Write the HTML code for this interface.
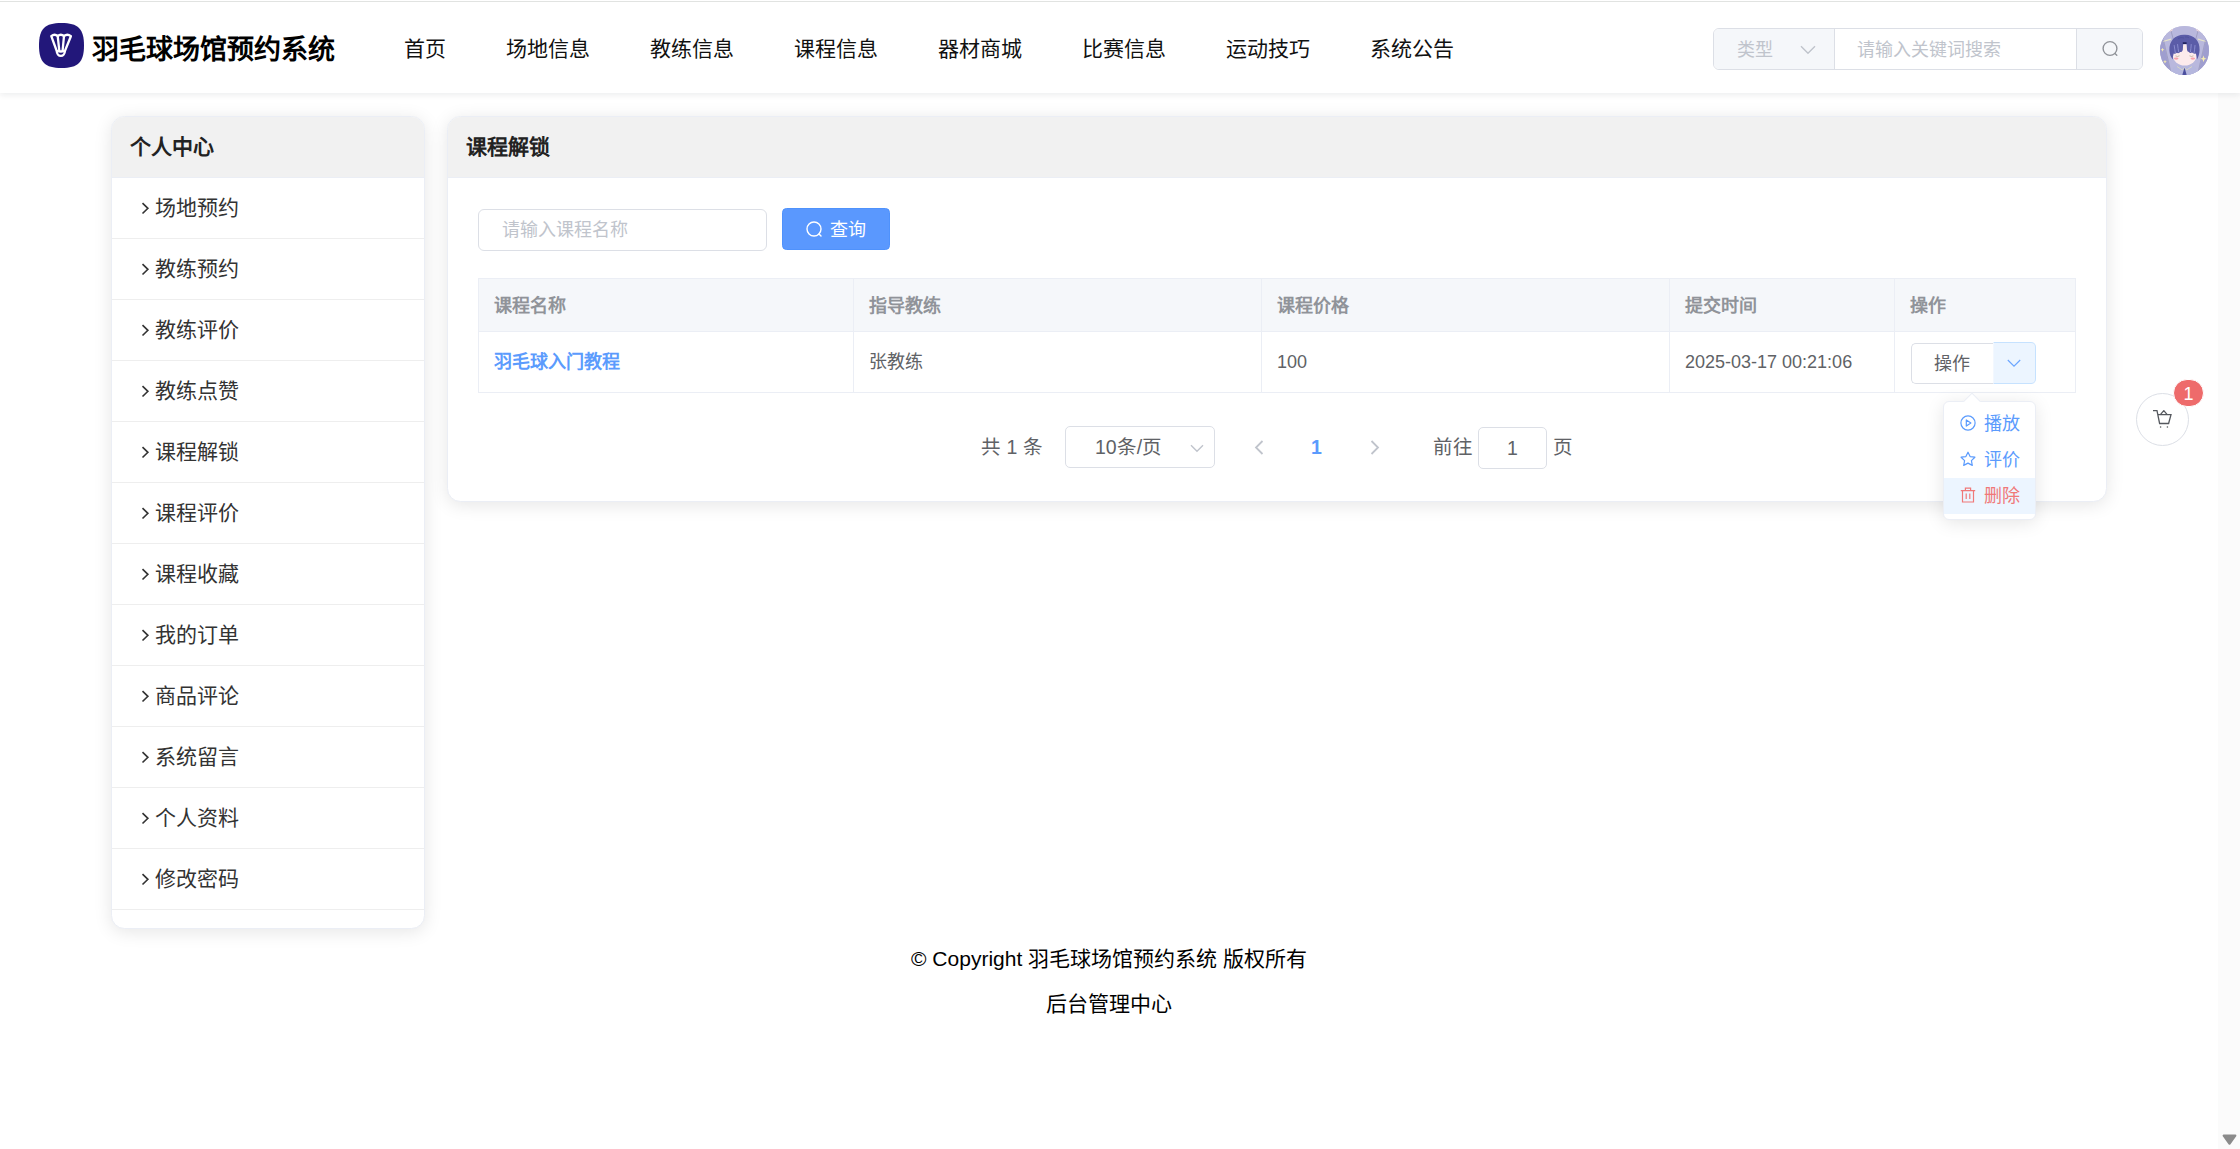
<!DOCTYPE html>
<html lang="zh-CN">
<head>
<meta charset="utf-8">
<title>羽毛球场馆预约系统</title>
<style>
*{box-sizing:border-box;margin:0;padding:0}
html,body{width:2240px;height:1149px;overflow:hidden;background:#fff}
body{position:relative;font-family:"Liberation Sans",sans-serif;color:#333;-webkit-font-smoothing:antialiased}
.abs{position:absolute}
/* scrollbar */
#sb{position:absolute;left:2218px;top:0;width:22px;height:1149px;background:#fbfbfb}
/* header */
#hd{position:absolute;left:0;top:0;width:2240px;height:93px;background:#fff;box-shadow:0 1.5px 6px rgba(0,21,41,.08)}
#topline{position:absolute;left:0;top:1px;width:2240px;height:1px;background:#e1e3e1}
#logo{position:absolute;left:39px;top:23px;width:45px;height:45px}
#title{position:absolute;left:92px;top:31.5px;height:36px;line-height:36px;font-size:27px;font-weight:bold;color:#000;white-space:nowrap;letter-spacing:0}
#nav{position:absolute;left:374px;top:28.5px;height:40px;display:flex;white-space:nowrap}
#nav span{display:block;width:144px;text-align:center;font-size:21px;line-height:40px;color:#111;overflow:visible}
#nav span:first-child{width:102px}
/* search */
#search{position:absolute;left:1713px;top:28px;width:430px;height:42px;border:1px solid #dcdfe6;border-radius:6px;background:#fff;display:flex;overflow:hidden}
#search .pre{width:121px;background:#f5f7fa;border-right:1px solid #dcdfe6;position:relative;color:#c0c4cc;font-size:18px;line-height:42px;padding-left:23px}
#search .mid{flex:1;color:#c0c4cc;font-size:18px;line-height:42px;padding-left:22px}
#search .app{width:66px;background:#f5f7fa;border-left:1px solid #dcdfe6;position:relative}
#avatar{position:absolute;left:2160px;top:26px;width:49px;height:49px;border-radius:50%;overflow:hidden}
/* cards */
.card{position:absolute;background:#fff;border:1px solid #ebeef5;border-radius:13.5px;box-shadow:0 3px 18px rgba(0,0,0,.1);overflow:hidden}
.card .hd{height:61px;background:#f1f1f1;border-bottom:1px solid #ebeef5;font-size:21px;font-weight:bold;color:#222;line-height:60px}
#side{left:111px;top:116px;width:314px;height:813px}
#side .hd{padding-left:18px}
#side .it{height:61px;border-bottom:1px solid #eee;line-height:60px;font-size:21px;color:#333;padding-left:29px;white-space:nowrap;position:relative}
#side .it svg{position:absolute;left:29px;top:23px}
#side .it b{font-weight:normal;margin-left:14px}
#main{left:447px;top:116px;width:1660px;height:386px;overflow:visible}
#main .hd{padding-left:18px;border-radius:12.5px 12.5px 0 0}

/* main body (coords relative to #main at 448,116) */
#q{position:absolute;left:30px;top:92px;width:289px;height:42px;border:1px solid #dcdfe6;border-radius:6px;font-size:18px;line-height:40px;color:#c0c4cc;padding-left:23px;white-space:nowrap}
#qb{position:absolute;left:334px;top:91px;width:108px;height:42px;border-radius:4.5px;background:#5a98fe;border:1px solid #4f92fc;color:#fff;font-size:18px;line-height:42px;white-space:nowrap}
#qb svg{position:absolute;left:21.9px;top:10.9px}
#qb span{position:absolute;left:47.2px;top:0}
#tb{position:absolute;left:30px;top:161px;width:1598px;height:115px;border:1px solid #ebeef5;border-right:none;font-size:18px}
#tb .th{position:absolute;top:0;height:53px;background:#f5f7fa;border-right:1px solid #ebeef5;border-bottom:1px solid #ebeef5;color:#909399;font-weight:bold;line-height:55px;padding-left:15px;white-space:nowrap}
#tb .td{position:absolute;top:53px;height:60px;border-right:1px solid #ebeef5;color:#606266;line-height:61px;padding-left:15px;white-space:nowrap}
#tb a{color:#5b9bfd;font-weight:bold;text-decoration:none}
.c1{left:0;width:375px}.c2{left:375px;width:408px}.c3{left:783px;width:408px}.c4{left:1191px;width:225px}.c5{left:1416px;width:181px}
#op1{position:absolute;left:1463px;top:226px;width:83px;height:41px;border:1px solid #dcdfe6;border-right:none;border-radius:5px 0 0 5px;background:#fff;color:#606266;font-size:18px;line-height:40px;text-align:center;padding-right:2px}
#op2{position:absolute;left:1545px;top:225px;width:43px;height:42px;border:1px solid #c6e2ff;border-left-color:#f3f8ff;border-radius:0 5px 5px 0;background:#ecf5ff}
#op2 svg{position:absolute;left:12.7px;top:15.5px}
/* pagination */
#pg{position:absolute;left:0;top:309px;width:1658px;height:42px;font-size:19.5px;color:#606266;line-height:42px;white-space:nowrap}
#pg>*{position:absolute;top:0}
#pg .sel{left:617px;width:150px;height:42px;border:1px solid #dcdfe6;border-radius:5px;line-height:40px}
#pg .sel span{position:absolute;left:29px;top:0}
#pg .sel svg{position:absolute;left:124px;top:17px}
#pg .jmp{left:1030px;top:1px;width:69px;height:42px;border:1px solid #dcdfe6;border-radius:5px;line-height:40px;text-align:center}

/* dropdown */
#dd{position:absolute;left:1943px;top:401px;width:93px;height:119px;background:#fff;border:1px solid #ebeef5;border-radius:6px;box-shadow:0 3px 18px rgba(0,0,0,.1);font-size:18px}
#dd .ar{position:absolute;left:22px;top:-7.2px;width:12px;height:12px;background:#fff;border-left:1px solid #ebeef5;border-top:1px solid #ebeef5;transform:rotate(45deg)}
#dd .mi{position:absolute;left:0;width:91px;height:36px;line-height:36px;color:#5b9bfd;white-space:nowrap}
#dd .mi svg{position:absolute;left:16px;top:9.3px}
#dd .mi span{position:absolute;left:40px;top:0}
#dd .mi.del{background:#ecf5ff;color:#f07878}
/* cart */
#cart{position:absolute;left:2136px;top:393px;width:53px;height:53px;border:1px solid #dcdfe6;border-radius:50%;background:#fff}
#cart svg{position:absolute;left:15px;top:15px}
#badge{position:absolute;left:2173px;top:379px;width:31px;height:28px;border:1px solid #fff;border-radius:14px;background:#ee6b6b;color:#fff;font-size:18px;line-height:28px;text-align:center}
/* footer */
#ft{position:absolute;left:0;top:938px;width:2218px;text-align:center;font-size:21px;line-height:43px;color:#000;white-space:nowrap}
</style>
</head>
<body>
<div id="sb"><svg style="position:absolute;left:4.3px;top:1134.3px" width="15" height="12" viewBox="0 0 15 12"><path d="M1.600 1.600 H13.400 L7.500 9.800 Z" fill="#8b8b8b" stroke="#8b8b8b" stroke-width="2" stroke-linejoin="round"/></svg></div>
<div id="hd">
  <div id="topline"></div>
  <svg id="logo" viewBox="0 0 45 45"><path d="M22.5 0C39.2 0 45 5.8 45 22.5C45 39.2 39.2 45 22.5 45C5.8 45 0 39.2 0 22.5C0 5.800 5.800 0 22.5 0Z" fill="#22177a"/><g fill="none" stroke="#fff" stroke-width="2.3" stroke-linecap="round" stroke-linejoin="round"><path d="M12.3 13.2 Q15.5 10.400 18.700 13 Q21.800 10.400 25 13 Q28.400 10.400 31.900 13.2 L25.900 28 A4.070 4.900 0 0 1 17.750 28 Z"/><path d="M18.700 13 L20.300 27.600 M25 13 L23.600 27.600"/><path d="M18 28.100 Q21.800 28.900 25.700 28.100"/></g></svg>
  <div id="title">羽毛球场馆预约系统</div>
  <div id="nav"><span>首页</span><span>场地信息</span><span>教练信息</span><span>课程信息</span><span>器材商城</span><span>比赛信息</span><span>运动技巧</span><span>系统公告</span></div>
  <div id="search"><div class="pre">类型<svg style="position:absolute;left:86px;top:16px" width="16" height="10" viewBox="0 0 16 10"><path d="M1 1.2 L8 8.2 L15 1.2" fill="none" stroke="#c0c4cc" stroke-width="1.4"/></svg></div><div class="mid">请输入关键词搜索</div><div class="app"><svg style="position:absolute;left:23.5px;top:10.9px" width="18" height="18" viewBox="0 0 18 18"><circle cx="9" cy="8.500" r="6.9" fill="none" stroke="#909399" stroke-width="1.4"/><path d="M13.900 13.400 L15.800 15.300" stroke="#909399" stroke-width="1.4" stroke-linecap="round"/></svg></div></div>
  <div id="avatar"><svg width="49" height="49" viewBox="0 0 49 49">
<defs><linearGradient id="ag" x1="0" y1="0" x2="0" y2="1"><stop offset="0" stop-color="#c1c0df"/><stop offset=".55" stop-color="#aeadd6"/><stop offset="1" stop-color="#9695c6"/></linearGradient></defs>
<rect width="49" height="49" fill="url(#ag)"/>
<path d="M0 14 L7 8 L13 49 H0Z M49 14 L42 8 L36 49 H49Z" fill="#9f9ecf"/>
<path d="M8 3 L14 0 H35 L41 3 L46 14 L38 49 H11 L3 14Z" fill="#b9b8dd"/>
<path d="M8.5 3.5 L11 1 L13 4 L10 6Z M40.5 3.5 L38 1 L36 4 L39 6Z" fill="#f4d9dc"/>
<path d="M3 15.5 L11 13.2 M46 15.5 L38 13.2" stroke="#e6e4c8" stroke-width="1.3" fill="none"/>
<path d="M3.5 14 L11.5 49 M45.5 14 L37.500 49 M11 5 L13.500 14 M38 5 L35.500 14" stroke="#8e8eb0" stroke-width=".6" fill="none"/>
<path d="M13.500 41 Q24.500 37 35.500 41 L38 49 H11Z" fill="#b5b7de"/>
<path d="M17 40.500 L22.500 44 L24.500 41.500 L26.500 44 L32 40.500" stroke="#d9d8c4" stroke-width=".9" fill="none"/>
<path d="M24.500 41.500 L26.700 49 H22.300Z" fill="#4b4f9e"/>
<ellipse cx="24.700" cy="29" rx="12" ry="10.500" fill="#fcebec"/>
<path d="M24.5 8.8 C34 8.500 40 15 39.6 24 C39.400 28 38.500 31 37 33.500 C36.800 31 36.300 29 35.800 27.500 C34.500 28 33 27.600 32 26.600 C30.800 27.400 29.500 27 28.600 25.800 C28 26 27.200 25 27 23.500 L26.600 18 H23.200 L22.800 24 C22.300 25.500 21.300 26.300 20.300 26 C19.300 27.200 18 27.500 16.800 26.800 C15.800 27.800 14.600 28 13.700 27.600 C13.200 29 12.900 31 12.900 33.500 C11 31.500 9.600 28.500 9.400 24.500 C9 15 15 8.500 24.5 8.8Z" fill="#5b5ca8"/>
<path d="M14.200 19.500 Q14.800 23.500 15.300 26.600 M17.600 18.500 Q18 22.500 18.600 25.800 M31.200 18.500 Q31 22.500 30.500 25.600 M35 19.500 Q34.700 23.500 34.100 26.600" stroke="#8f92d4" stroke-width=".9" fill="none" stroke-linecap="round"/>
<path d="M18 12.500 Q21 10.800 24 12 M25 11 Q27 10.500 29 11.800" stroke="#474a92" stroke-width=".5" fill="none"/>
<path d="M22.800 16.200 H26.600 V18 H22.800Z" fill="#23235e"/>
<ellipse cx="16.200" cy="32.600" rx="2.300" ry="1.100" fill="#f9a3ab"/><ellipse cx="32.800" cy="32.600" rx="2.300" ry="1.100" fill="#f9a3ab"/>
<path d="M15.500 29.800 Q17.500 31.200 19.500 29.800 M29.500 29.800 Q31.500 31.200 33.500 29.800" stroke="#b9a98a" stroke-width=".7" fill="none"/>
<path d="M43.500 29.500 L44.400 32 L46.500 32.800 L44.400 33.600 L43.500 36.200 L42.600 33.600 L40.500 32.800 L42.600 32Z M2.500 21.800 L3.100 23.300 L4.500 23.800 L3.100 24.300 L2.500 25.800 L1.900 24.300 L.5 23.800 L1.900 23.300Z M5 33.800 L5.600 35.200 L6.900 35.700 L5.600 36.200 L5 37.600 L4.400 36.200 L3.100 35.700 L4.400 35.200Z" fill="#f6ecae"/>
</svg></div>
</div>
<div class="card" id="side">
  <div class="hd">个人中心</div>
  <div class="it"><svg width="9" height="15" viewBox="0 0 9 15"><path d="M1.500 2.100 L6.900 7.300 L1.500 12.500" fill="none" stroke="#333" stroke-width="1.6"/></svg><b>场地预约</b></div>
  <div class="it"><svg width="9" height="15" viewBox="0 0 9 15"><path d="M1.500 2.100 L6.900 7.300 L1.500 12.500" fill="none" stroke="#333" stroke-width="1.6"/></svg><b>教练预约</b></div>
  <div class="it"><svg width="9" height="15" viewBox="0 0 9 15"><path d="M1.500 2.100 L6.900 7.300 L1.500 12.500" fill="none" stroke="#333" stroke-width="1.6"/></svg><b>教练评价</b></div>
  <div class="it"><svg width="9" height="15" viewBox="0 0 9 15"><path d="M1.500 2.100 L6.900 7.300 L1.500 12.500" fill="none" stroke="#333" stroke-width="1.6"/></svg><b>教练点赞</b></div>
  <div class="it"><svg width="9" height="15" viewBox="0 0 9 15"><path d="M1.500 2.100 L6.900 7.300 L1.500 12.500" fill="none" stroke="#333" stroke-width="1.6"/></svg><b>课程解锁</b></div>
  <div class="it"><svg width="9" height="15" viewBox="0 0 9 15"><path d="M1.500 2.100 L6.900 7.300 L1.500 12.500" fill="none" stroke="#333" stroke-width="1.6"/></svg><b>课程评价</b></div>
  <div class="it"><svg width="9" height="15" viewBox="0 0 9 15"><path d="M1.500 2.100 L6.900 7.300 L1.500 12.500" fill="none" stroke="#333" stroke-width="1.6"/></svg><b>课程收藏</b></div>
  <div class="it"><svg width="9" height="15" viewBox="0 0 9 15"><path d="M1.500 2.100 L6.900 7.300 L1.500 12.500" fill="none" stroke="#333" stroke-width="1.6"/></svg><b>我的订单</b></div>
  <div class="it"><svg width="9" height="15" viewBox="0 0 9 15"><path d="M1.500 2.100 L6.900 7.300 L1.500 12.500" fill="none" stroke="#333" stroke-width="1.6"/></svg><b>商品评论</b></div>
  <div class="it"><svg width="9" height="15" viewBox="0 0 9 15"><path d="M1.500 2.100 L6.900 7.300 L1.500 12.500" fill="none" stroke="#333" stroke-width="1.6"/></svg><b>系统留言</b></div>
  <div class="it"><svg width="9" height="15" viewBox="0 0 9 15"><path d="M1.500 2.100 L6.900 7.300 L1.500 12.500" fill="none" stroke="#333" stroke-width="1.6"/></svg><b>个人资料</b></div>
  <div class="it"><svg width="9" height="15" viewBox="0 0 9 15"><path d="M1.500 2.100 L6.900 7.300 L1.500 12.500" fill="none" stroke="#333" stroke-width="1.6"/></svg><b>修改密码</b></div>
</div>
<div class="card" id="main">
  <div class="hd">课程解锁</div>
  <div id="q">请输入课程名称</div>
  <div id="qb"><svg width="18" height="18" viewBox="0 0 18 18"><circle cx="9" cy="9" r="7" fill="none" stroke="#fff" stroke-width="1.4"/><path d="M14 14 L16 16" stroke="#fff" stroke-width="1.4" stroke-linecap="round"/></svg><span>查询</span></div>
  <div id="tb">
    <div class="th c1">课程名称</div><div class="th c2">指导教练</div><div class="th c3">课程价格</div><div class="th c4">提交时间</div><div class="th c5">操作</div>
    <div class="td c1"><a>羽毛球入门教程</a></div><div class="td c2">张教练</div><div class="td c3">100</div><div class="td c4">2025-03-17 00:21:06</div><div class="td c5"></div>
  </div>
  <div id="op1">操作</div>
  <div id="op2"><svg width="14" height="9" viewBox="0 0 14 9"><path d="M.8 1 L7 7.2 L13.2 1" fill="none" stroke="#6aa5ff" stroke-width="1.15"/></svg></div>
  <div id="pg">
    <span style="left:533px">共 1 条</span>
    <div class="sel"><span>10条/页</span><svg width="14" height="9" viewBox="0 0 14 9"><path d="M1 1.2 L7 7.2 L13 1.2" fill="none" stroke="#c0c4cc" stroke-width="1.4"/></svg></div>
    <svg style="left:806px;top:14px" width="10" height="15" viewBox="0 0 10 15"><path d="M8.5 1 L2 7.5 L8.5 14" fill="none" stroke="#c0c4cc" stroke-width="1.8"/></svg>
    <b style="left:863px;color:#5b9bfd">1</b>
    <svg style="left:922px;top:14px" width="10" height="15" viewBox="0 0 10 15"><path d="M1.5 1 L8 7.5 L1.5 14" fill="none" stroke="#c0c4cc" stroke-width="1.8"/></svg>
    <span style="left:985px">前往</span>
    <div class="jmp">1</div>
    <span style="left:1105px">页</span>
  </div>
</div>

<div id="dd"><div class="ar"></div>
  <div class="mi" style="top:4px"><svg width="16" height="16" viewBox="0 0 16 16" fill="none" stroke="#5b9bfd" stroke-width="1.2"><circle cx="8" cy="8" r="7.1"/><path d="M6.3 4.9 L10.9 8 L6.3 11.1 Z" stroke-linejoin="round"/></svg><span>播放</span></div>
  <div class="mi" style="top:40px"><svg width="16" height="16" viewBox="0 0 16 16" fill="none" stroke="#5b9bfd" stroke-width="1.2" stroke-linejoin="round"><path d="M8 1.2 L10.1 5.6 L14.9 6.2 L11.4 9.6 L12.3 14.4 L8 12.1 L3.7 14.4 L4.6 9.6 L1.1 6.2 L5.9 5.6 Z"/></svg><span>评价</span></div>
  <div class="mi del" style="top:76px"><svg width="16" height="16" viewBox="0 0 16 16" fill="none" stroke="#f07878" stroke-width="1.2"><path d="M0.8 3.6 H15.2 M5.4 3.4 V1.2 H10.6 V3.4 M2.5 3.6 V15 H13.5 V3.6 M6.2 6.5 V12 M9.8 6.5 V12"/></svg><span>删除</span></div>
</div>
<div id="cart"><svg width="21" height="20" viewBox="0 0 21 20" fill="none" stroke="#55585e" stroke-width="1.3"><path d="M1 1.7 H5 L7.6 14.5 H16.6 L19 5.6 H6"/><path d="M8.6 5.4 L11.8 1.6 L15 5.4" stroke-linejoin="round"/><circle cx="8.6" cy="18" r="0.8" fill="#55585e" stroke="none"/><circle cx="15.4" cy="18" r="0.8" fill="#55585e" stroke="none"/></svg></div>
<div id="badge">1</div>
<div id="ft"><div style="position:absolute;left:0;top:-1px;width:100%">© Copyright 羽毛球场馆预约系统 版权所有</div><div style="position:absolute;left:0;top:43.600px;width:100%">后台管理中心</div></div>
</body>
</html>
